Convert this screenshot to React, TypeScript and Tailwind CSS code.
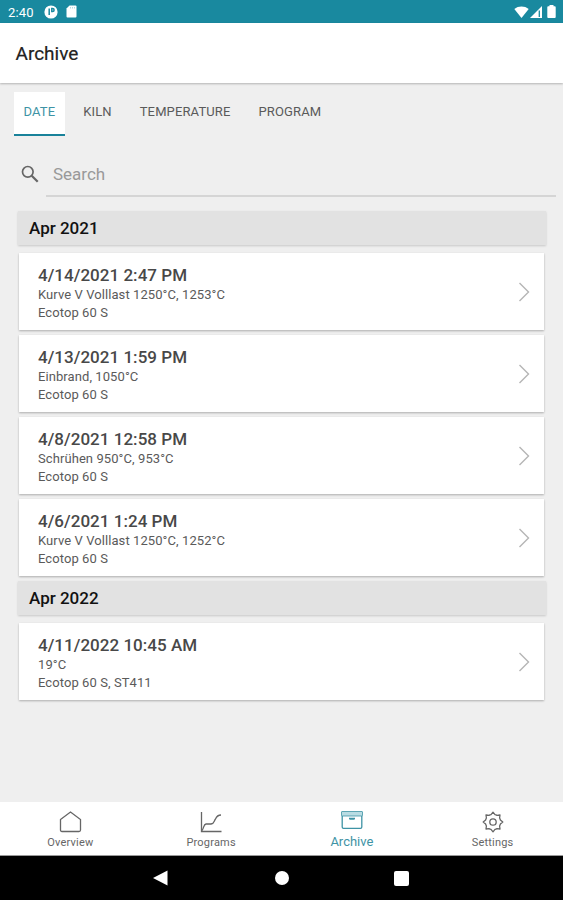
import { Fragment, type ReactNode } from "react";

const tabs = ["DATE", "KILN", "TEMPERATURE", "PROGRAM"];

const groups = [
  {
    month: "Apr 2021",
    firings: [
      { date: "4/14/2021 2:47 PM", program: "Kurve V Volllast 1250°C, 1253°C", kiln: "Ecotop 60 S" },
      { date: "4/13/2021 1:59 PM", program: "Einbrand, 1050°C", kiln: "Ecotop 60 S" },
      { date: "4/8/2021 12:58 PM", program: "Schrühen 950°C, 953°C", kiln: "Ecotop 60 S" },
      { date: "4/6/2021 1:24 PM", program: "Kurve V Volllast 1250°C, 1252°C", kiln: "Ecotop 60 S" },
    ],
  },
  {
    month: "Apr 2022",
    firings: [{ date: "4/11/2022 10:45 AM", program: "19°C", kiln: "Ecotop 60 S, ST411" }],
  },
];

function StatusBar() {
  return (
    <div className="flex h-[23px] items-center bg-[#19899f] pl-2 pr-[7px] text-white">
      <span className="w-[27px] pt-px text-[13px] leading-none tracking-[0.2px]">2:40</span>
      <svg className="ml-[9px]" width="14" height="14" viewBox="0 0 14 14">
        <circle cx="7" cy="7" r="6.6" fill="currentColor" />
        <path d="M5.200 3.500v6.500M7.800 3.500h.8a1.500 1.500 0 0 1 0 3h-.8z" fill="none" stroke="#19899f" strokeWidth="1.500" />
      </svg>
      <svg className="ml-[8px]" width="11" height="13" viewBox="0 0 11 13">
        <path d="M3.500.5h6a1 1 0 0 1 1 1v10a1 1 0 0 1-1 1h-8a1 1 0 0 1-1-1v-8z" fill="currentColor" />
        <path d="M4.500 2v1.500M6.500 2v1.500M8.500 2v1.500" stroke="#19899f" strokeWidth=".8" opacity=".4" />
      </svg>
      <svg className="ml-auto" width="15" height="12" viewBox="0 0 15 12">
        <path d="M.3 3C4.400-.3 10.600-.3 14.700 3L7.500 12z" fill="currentColor" />
      </svg>
      <svg className="ml-[1px]" width="12" height="12" viewBox="0 0 12 12">
        <path d="M0 12 12 0v12z" fill="currentColor" />
        <path d="M9.300 4.500v6.500" stroke="#19899f" strokeWidth="1.300" />
      </svg>
      <svg className="ml-[5px]" width="9" height="13" viewBox="0 0 9 13">
        <path d="M2.500 0h4v1.300h1.300q.9 0 .9.900v9.900q0 .9-.9.900H1.200q-.9 0-.9-.9V2.200q0-.9.9-.9h1.300z" fill="currentColor" />
      </svg>
    </div>
  );
}

function MonthHeader({ month }: { month: string }) {
  return (
    <h2 className="ml-[18px] mr-[17px] flex h-[34px] items-center bg-[#e2e2e2] pt-px pl-[11px] text-[17px] font-medium text-[#111] shadow-[0_1px_2px_rgba(0,0,0,0.16)]">
      {month}
    </h2>
  );
}

function FiringCard({ date, program, kiln }: { date: string; program: string; kiln: string }) {
  return (
    <li className="flex h-[77px] items-center bg-white pl-[19px] pr-[14.500px] shadow-[0_1px_2px_rgba(0,0,0,0.28)]">
      <div className="flex-1 pt-[2px]">
        <p className="text-[17px] leading-[22px] font-medium tracking-[0.030px] text-[#484848]">{date}</p>
        <p className="text-[13px] leading-[18px] tracking-[0.080px] text-[#5a5a5a]">{program}</p>
        <p className="text-[13px] leading-[18px] tracking-[0.080px] text-[#5a5a5a]">{kiln}</p>
      </div>
      <svg width="12" height="20" viewBox="0 0 12 20" fill="none" stroke="#b5b5b5" strokeWidth="1.400">
        <path d="m1.500 1 9 9-9 9" />
      </svg>
    </li>
  );
}

function NavItem({ label, active, children }: { label: string; active?: boolean; children: ReactNode }) {
  return (
    <button className={`flex flex-1 flex-col items-center pt-2 ${active ? "text-[#3e93a5]" : "text-[#666]"}`}>
      <svg width="24" height="24" viewBox="0 0 24 24" fill="none" stroke="currentColor" strokeWidth="1.300">
        {children}
      </svg>
      <span className={active ? "mt-px text-[13px] leading-[14px]" : "mt-[2px] text-[11px] leading-[14px] tracking-[0.2px]"}>
        {label}
      </span>
    </button>
  );
}

export default function App() {
  return (
    <div className="flex h-[900px] w-[563px] flex-col overflow-hidden bg-[#efefef] font-[Roboto,sans-serif]">
      <StatusBar />
      <header className="flex h-[60px] items-center bg-white pt-[2px] pl-[15.500px] shadow-[0_1px_2px_rgba(0,0,0,0.25)]">
        <h1 className="text-[19px] text-[#222] [-webkit-text-stroke:0.2px]">Archive</h1>
      </header>

      <main className="flex-1">
        <div className="flex gap-[9px] pt-[9px] pl-[14px]">
          {tabs.map((tab, i) => (
            <button
              key={tab}
              className={`flex h-11 justify-center border-b-2 px-[9.500px] pt-[10.500px] text-[13px] leading-[18px] tracking-[0.130px] ${
                i === 0 ? "border-[#19829a] bg-white text-[#3e93a5]" : "border-transparent text-[#5a5a5a]"
              }`}
            >
              {tab}
            </button>
          ))}
        </div>

        <div className="mt-4 flex h-11 items-center">
          <svg className="ml-[21px]" width="18" height="18" viewBox="0 0 18 18" fill="none" stroke="#666">
            <circle cx="6.800" cy="6.800" r="5.300" strokeWidth="1.700" />
            <path d="m10.700 10.700 6 6" strokeWidth="2.200" />
          </svg>
          <input
            placeholder="Search"
            className="ml-[7px] mr-[7px] mt-px h-11 flex-1 border-b-2 border-[#d5d5d5] bg-transparent pt-px pl-[7px] text-[17px] outline-none placeholder:text-[#999]"
          />
        </div>

        <div className="mt-[15px]">
          {groups.map((group) => (
            <Fragment key={group.month}>
              <MonthHeader month={group.month} />
              <ul className="mt-2 mr-[19px] mb-[5px] ml-[19px] space-y-[5px]">
                {group.firings.map((firing) => (
                  <FiringCard key={firing.date} {...firing} />
                ))}
              </ul>
            </Fragment>
          ))}
        </div>
      </main>

      <nav className="flex h-[54px] border-b border-[#999] bg-white">
        <NavItem label="Overview">
          <path d="M2.500 9.500 12.500 2l10 7.500V20q0 1.500-1.500 1.500H4Q2.500 21.500 2.500 20z" />
        </NavItem>
        <NavItem label="Programs">
          <path d="M2.500 2v19.500h20" />
          <path d="M3 20.500c2-2.500 1.500-6 4-6.500h5c3.500-.5 3-3.500 4.500-5 1.500-3.500 3-4 5.500-4" />
        </NavItem>
        <NavItem label="Archive" active>
          <rect x="1.500" y="1.500" width="21" height="4.500" rx=".5" fill="#b9dce3" strokeWidth=".8" />
          <path d="M2.200 6v11q0 1.300 1.300 1.300h17q1.300 0 1.300-1.300V6" />
          <path d="M9 7.800h6v.7q0 1.200-1.200 1.200h-3.600Q9 9.700 9 8.500z" fill="currentColor" stroke="none" />
        </NavItem>
        <NavItem label="Settings">
          <path
            strokeLinejoin="round"
            d="m12 2.200 2 2.400q1.100.3 2 .8l3-.4-.4 3q.5.9.8 2l2.400 2-2.400 2q-.3 1.100-.8 2l.4 3-3-.4q-.9.500-2 .8l-2 2.400-2-2.400q-1.100-.3-2-.8l-3 .4.4-3q-.5-.9-.8-2l-2.400-2 2.400-2q.3-1.100.8-2L5 5l3 .4q.9-.5 2-.8z"
          />
          <circle cx="12" cy="12" r="3.200" />
        </NavItem>
      </nav>

      <div className="flex h-11 items-center bg-black text-white">
        <svg className="ml-[153px]" width="15" height="16" viewBox="0 0 15 16">
          <path d="M14.500.5v15L0 8z" fill="currentColor" />
        </svg>
        <div className="ml-[107px] size-[14px] rounded-full bg-white" />
        <div className="ml-[105px] size-[15px] rounded-[2px] bg-white" />
      </div>
    </div>
  );
}
